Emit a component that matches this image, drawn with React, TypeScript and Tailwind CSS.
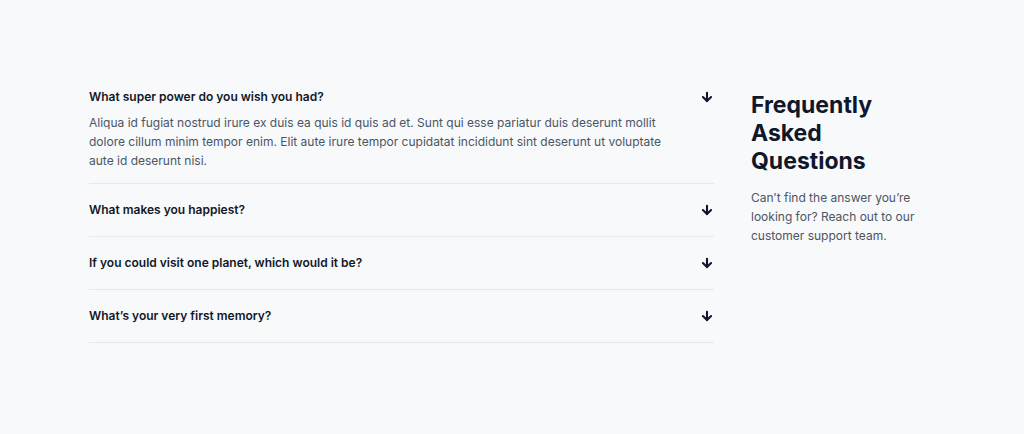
import { ArrowDown } from "lucide-react";

const faqs = [
    {
        q: "What super power do you wish you had?",
        a: "Aliqua id fugiat nostrud irure ex duis ea quis id quis ad et. Sunt qui esse pariatur duis deserunt mollit dolore cillum minim tempor enim. Elit aute irure tempor cupidatat incididunt sint deserunt ut voluptate aute id deserunt nisi.",
    },
    { q: "What makes you happiest?" },
    { q: "If you could visit one planet, which would it be?" },
    { q: "What\u2019s your very first memory?" },
];

export default function App() {
    return (
        <div className="min-h-[434px] w-full bg-[#f8f9fb] font-['Inter',sans-serif]">
            <div className="flex pl-[89px] pt-[71px] gap-[37px]">
                <div className="w-[625px]">
                    {faqs.map((item, i) => (
                        <div key={i} className="border-b border-[#e6e8ec]">
                            <div className="flex items-center justify-between py-4">
                                <span className="text-[12px] leading-5 font-semibold text-[#111827]">{item.q}</span>
                                <ArrowDown className="w-[14px] h-[14px] text-[#0f172a]" strokeWidth={3.6} />
                            </div>
                            {item.a && (
                                <p className="-mt-[10px] pb-[13px] pr-12 text-[12px] leading-[19px] text-[#4b5563]">
                                    {item.a}
                                </p>
                            )}
                        </div>
                    ))}
                </div>
                <div className="w-[184px] pt-5">
                    <h2 className="text-[23px] leading-7 font-bold text-[#0f172a]">
                        Frequently Asked Questions
                    </h2>
                    <p className="mt-[13px] text-[12px] leading-[19px] text-[#4b5563]">
                        Can&rsquo;t find the answer you&rsquo;re looking for? Reach out to our customer support team.
                    </p>
                </div>
            </div>
        </div>
    );
}
